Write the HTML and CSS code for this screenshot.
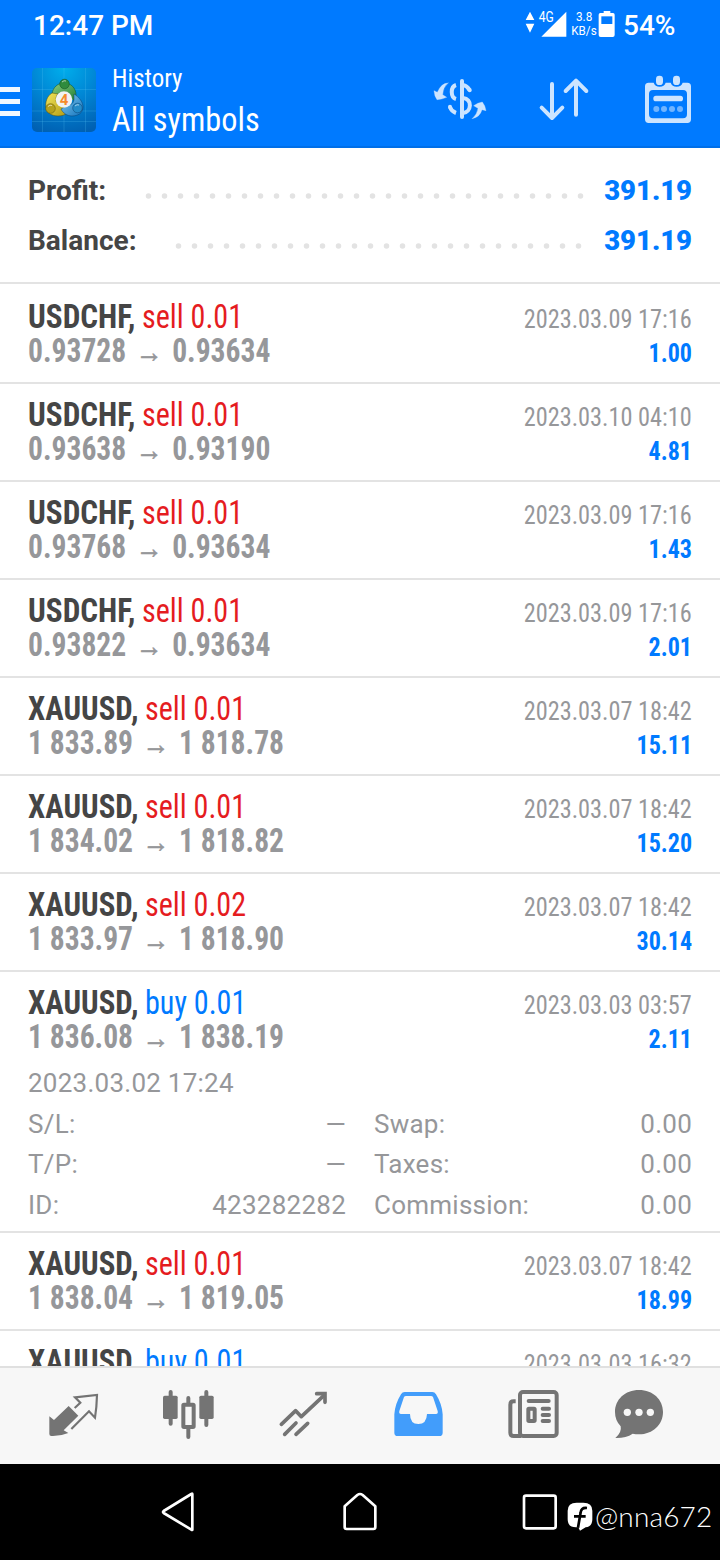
FILE: index.html
```html
<!DOCTYPE html>
<html lang="en">
<head>
<meta charset="utf-8">
<title>History</title>
<link rel="stylesheet" href="styles.css">
</head>
<body>
<div class="phone">
  <header class="top">
    <div class="status">
      <span class="clock">12:47 PM</span>
      <svg class="signals" width="96" height="34" viewBox="310 21 288 102" fill="#fff">
        <path d="M331 35l13 25h-26zM318 71h26l-13 27zM440 35v75h-75zM552 33h20v6h8q5 0 5 5v61q0 6-6 6h-36q-6 0-6-6V44q0-5 5-5h10z"/>
        <path d="M545 49h33v23h-33z" fill="#007aff"/>
        <g class="tiny"><text x="357" y="67" font-size="42" textLength="45" lengthAdjust="spacingAndGlyphs">4G</text>
        <text x="469" y="63" font-size="36" textLength="49" lengthAdjust="spacingAndGlyphs">3.8</text>
        <text x="455" y="105" font-size="36" textLength="76" lengthAdjust="spacingAndGlyphs">KB/s</text></g>
      </svg>
      <span class="charge">54%</span>
    </div>
    <div class="appbar">
      <div class="menu"><i></i><i></i><i></i></div>
      <svg class="logo" width="64" height="64" viewBox="0 0 64 64">
        <defs>
          <radialGradient id="sky" cx=".5" cy="0" r="1.05"><stop offset="0" stop-color="#00aeec"/><stop offset=".5" stop-color="#0085d4"/><stop offset="1" stop-color="#0060b2"/></radialGradient>
          <linearGradient id="green" x2="1" y2="1"><stop offset="0" stop-color="#8ccb7d"/><stop offset="1" stop-color="#1f7f35"/></linearGradient>
          <linearGradient id="gold" x2="1" y2="1"><stop offset="0" stop-color="#f2e65c"/><stop offset="1" stop-color="#b29a12"/></linearGradient>
          <linearGradient id="blue" x2="1" y2="1"><stop offset="0" stop-color="#85cdf0"/><stop offset="1" stop-color="#1272bd"/></linearGradient>
        </defs>
        <rect width="64" height="64" rx="5" fill="url(#sky)"/>
        <path d="M10.500 0v64M32 0v64M53.500 0v64M0 21.500h64M0 43h64M0 53.500h64" stroke="#5cc8f4" stroke-opacity=".22" fill="none"/>
        <g stroke-opacity=".6" stroke-width=".8">
          <path d="M32 15c7 0 12 5 12 12v6l-5-2c0-5-3-7-7-7s-7 2-9 5l-3-3c1-7 6-11 12-11z" fill="url(#green)" stroke="#0b4a20"/>
          <path d="M20 25c-5 3-7 9-6 15 1 5 6 8 12 8 4 0 7-1 9-3l-5-8c-2 1-5-1-6-4 0-3 0-5 2-7z" fill="url(#gold)" stroke="#574b06"/>
          <path d="M42 26c5 3 9 8 9 13 0 6-5 9-11 9-5 0-9-3-11-7l7-4c4 0 6-3 6-6z" fill="url(#blue)" stroke="#083d6d"/>
          <circle cx="32.500" cy="16" r="4.800" fill="#2f8b3d" stroke="#0b4a20"/>
          <circle cx="18.500" cy="40.500" r="4.800" fill="#b5a21e" stroke="#574b06"/>
          <circle cx="45.500" cy="40" r="4.800" fill="#238bc9" stroke="#083d6d"/>
        </g>
        <path d="M30 14q2-2 4-1M16 38.500q2-2 4-1M43 38q2-2 4-1" stroke="#fff" stroke-opacity=".6" fill="none"/>
        <circle cx="32" cy="31.500" r="8.300" fill="#f1f2f3"/>
        <text class="four" x="32" y="37" text-anchor="middle">4</text>
      </svg>
      <div class="titles"><span class="sub cond">History</span><span class="main cond">All symbols</span></div>
      <svg class="actions" width="264" height="56" viewBox="30 216 792 168" fill="none" stroke="#cce4ff" stroke-linecap="round" stroke-linejoin="round">
        <g stroke-width="12">
          <path d="M126 243v108"/>
          <path d="M129 255q12 2 20 16M129 294c29 3 26 42 0 45" stroke-linecap="butt"/>
          <path d="M149 270v1"/>
          <path d="M108 255c-17 5-17 37 0 42M90 321q4 13 18 18" stroke-linecap="butt"/>
          <path d="M90 320v1"/>
        </g>
        <path d="M84 249q-20 0-32 28l-10-5q1 16 9 27 13 0 29-7l-12-8q0-20 16-35zM157 356q15-14 17-31l-13-8q12-9 26-11 9 11 11 26l-12-3q-6 22-29 27z" fill="#cce4ff" stroke="#cce4ff" stroke-width="1"/>
        <path d="M396 252v100M365 323l31 31 31-31M468 344V242M437 273l31-31 31 31" stroke-width="12"/>
        <g stroke="none" fill="#cce4ff">
          <path fill-rule="evenodd" d="M686 248h15q4 12 18 12t18-12h15q4 12 18 12t18-12h14q11 0 11 11v99q0 11-11 11H686q-11 0-11-11v-99q0-11 11-11zM699 270q-12 0-12 12v60q0 13 12 13h90q12 0 12-13v-60q0-12-12-12z"/>
          <rect x="708" y="227" width="21" height="28" rx="10"/><rect x="759" y="227" width="21" height="28" rx="10"/>
          <rect x="700" y="287" width="89" height="17" rx="8"/>
          <g opacity=".55"><circle cx="709" cy="327" r="9"/><circle cx="732" cy="327" r="9"/><circle cx="756" cy="327" r="9"/><circle cx="780" cy="327" r="9"/></g>
        </g>
      </svg>
    </div>
  </header>

  <section class="summary">
    <div class="total"><span>Profit:</span><svg class="dots" width="446" height="6"><path d="M6.500 3h433"/></svg><b>391.19</b></div>
    <div class="total"><span>Balance:</span><svg class="dots" width="416" height="6"><path d="M6.500 3h401"/></svg><b>391.19</b></div>
  </section>

  <main class="deals">
    <article class="deal usd"><div class="line"><span class="name cond"><b>USDCHF,</b> <span class="sell">sell 0.01</span></span><time class="cond">2023.03.09 17:16</time></div><div class="line"><span class="price cond">0.93728 <i>→</i> 0.93634</span><span class="gain cond">1.00</span></div></article>
    <article class="deal usd"><div class="line"><span class="name cond"><b>USDCHF,</b> <span class="sell">sell 0.01</span></span><time class="cond">2023.03.10 04:10</time></div><div class="line"><span class="price cond">0.93638 <i>→</i> 0.93190</span><span class="gain cond">4.81</span></div></article>
    <article class="deal usd"><div class="line"><span class="name cond"><b>USDCHF,</b> <span class="sell">sell 0.01</span></span><time class="cond">2023.03.09 17:16</time></div><div class="line"><span class="price cond">0.93768 <i>→</i> 0.93634</span><span class="gain cond">1.43</span></div></article>
    <article class="deal usd"><div class="line"><span class="name cond"><b>USDCHF,</b> <span class="sell">sell 0.01</span></span><time class="cond">2023.03.09 17:16</time></div><div class="line"><span class="price cond">0.93822 <i>→</i> 0.93634</span><span class="gain cond">2.01</span></div></article>
    <article class="deal"><div class="line"><span class="name cond"><b>XAUUSD,</b> <span class="sell">sell 0.01</span></span><time class="cond">2023.03.07 18:42</time></div><div class="line"><span class="price cond">1 833.89 <i>→</i> 1 818.78</span><span class="gain cond">15.11</span></div></article>
    <article class="deal"><div class="line"><span class="name cond"><b>XAUUSD,</b> <span class="sell">sell 0.01</span></span><time class="cond">2023.03.07 18:42</time></div><div class="line"><span class="price cond">1 834.02 <i>→</i> 1 818.82</span><span class="gain cond">15.20</span></div></article>
    <article class="deal"><div class="line"><span class="name cond"><b>XAUUSD,</b> <span class="sell">sell 0.02</span></span><time class="cond">2023.03.07 18:42</time></div><div class="line"><span class="price cond">1 833.97 <i>→</i> 1 818.90</span><span class="gain cond">30.14</span></div></article>
    <article class="deal open"><div class="line"><span class="name cond"><b>XAUUSD,</b> <span class="buy">buy 0.01</span></span><time class="cond">2023.03.03 03:57</time></div><div class="line"><span class="price cond">1 836.08 <i>→</i> 1 838.19</span><span class="gain cond">2.11</span></div>
      <div class="details">
        <div class="opened">2023.03.02 17:24</div>
        <div class="pair"><span>S/L:</span><span class="none">—</span></div><div class="pair"><span>Swap:</span><span>0.00</span></div>
        <div class="pair"><span>T/P:</span><span class="none">—</span></div><div class="pair"><span>Taxes:</span><span>0.00</span></div>
        <div class="pair"><span>ID:</span><span>423282282</span></div><div class="pair"><span>Commission:</span><span>0.00</span></div>
      </div>
    </article>
    <article class="deal"><div class="line"><span class="name cond"><b>XAUUSD,</b> <span class="sell">sell 0.01</span></span><time class="cond">2023.03.07 18:42</time></div><div class="line"><span class="price cond">1 838.04 <i>→</i> 1 819.05</span><span class="gain cond">18.99</span></div></article>
    <article class="deal"><div class="line"><span class="name cond"><b>XAUUSD,</b> <span class="buy">buy 0.01</span></span><time class="cond">2023.03.03 16:32</time></div></article>
  </main>

  <nav class="tabs">
    <svg width="57" height="56" viewBox="135 48 171 168"><path d="M206 108l29 29-44 44 14 8q-24 10-51 9-6 0-6-6 0-28 0-53l14 11z" fill="#747474"/><path d="M224 114l17-16-16-16 66-7q-1 38-6 68l-18-19-53 53" fill="none" stroke="#747474" stroke-width="6.500"/></svg>
    <svg width="57" height="56" viewBox="480 48 171 168" fill="none" stroke="#747474" stroke-width="12" stroke-linecap="round"><path d="M512 66v95M619 66v99M565 84v18M565 177v24"/><rect x="489" y="77" width="44" height="70" rx="5" fill="#747474" stroke="none"/><rect x="598" y="77" width="43" height="70" rx="5" fill="#747474" stroke="none"/><rect x="550" y="104" width="31" height="67" rx="2" stroke-width="12" stroke-linecap="butt"/></svg>
    <svg width="57" height="56" viewBox="825 48 171 168" fill="none" stroke="#747474" stroke-width="11" stroke-linecap="round"><path d="M844 163l43-41 17 18 68-64" stroke-linejoin="round"/><path d="M950 71h25v26" stroke-width="11"/><path d="M888 159l-34 34M923 160l-35 33"/></svg>
    <svg width="57" height="56" viewBox="90 48 171 168"><path fill="#429dfb" fill-rule="evenodd" d="M134 66h83q7 0 11 7 18 29 20 60v55q0 10-10 10H113q-10 0-10-10v-55q2-31 20-60 4-7 11-7zM138 78q-4 0-6 3l-14 42q-2 9 5 9h27q0 30 25 30t26-30h27q7 0 5-9l-14-42q-2-3-6-3z"/></svg>
    <svg width="57" height="56" viewBox="435 48 171 168" fill="none" stroke="#747474" stroke-width="12"><path d="M467 94h-6q-10 0-10 10v84q0 10 10 10h23"/><rect x="480" y="66" width="110" height="132" rx="9"/><path d="M506 93h60M548 116h19M548 135h19M548 153h19" stroke-linecap="round"/><rect x="505" y="116" width="19" height="37" rx="2"/></svg>
    <svg width="57" height="56" viewBox="753 48 171 168"><path fill="#747474" d="M837 60c42 0 72 29 72 66s-30 67-72 67q-10 0-19-2-21 14-52 13 20-17 16-35-17-18-17-43c0-37 30-66 72-66z"/><g fill="#f7f7f7"><circle cx="802" cy="127" r="11"/><circle cx="837" cy="127" r="11"/><circle cx="871" cy="127" r="11"/></g></svg>
  </nav>

  <footer class="system">
    <svg width="400" height="48" viewBox="480 354 1200 144" fill="none" stroke="#fff" stroke-width="8" stroke-linejoin="round"><path d="M577 372v107q0 2-3 0l-83-50q-4-3 0-6l83-51q3-2 3 0z"/><path d="M1034 409v62q0 6 6 6h80q6 0 6-6v-62l-38-34q-8-6-16 0z"/><rect x="1572" y="377" width="95" height="98" rx="6"/></svg>
    <div class="tag">
      <svg width="26" height="30" viewBox="621 400 78 90"><path fill="#fff" d="M650 402h20q27 0 27 24v26q0 22-20 24l-17 10-5-10h-7q-25 0-25-24v-26q0-24 27-24z"/><path d="M681 418q-17-2-19 13l-8 46M642 443h35" fill="none" stroke="#000" stroke-width="8"/></svg>
      <span>@nna672</span>
    </div>
  </footer>
</div>
</body>
</html>
```
FILE: styles.css
```css
* { box-sizing: border-box; }
body { margin: 0; background: #fff; font-family: Roboto, "Liberation Sans", sans-serif; }
.phone { width: 720px; height: 1560px; display: flex; flex-direction: column; overflow: hidden; }
.cond { font-family: "Roboto Condensed", Roboto, sans-serif; font-stretch: 75%; white-space: nowrap; }

.top { height: 148px; flex: none; background: #007aff; color: #fff; border-bottom: 2px solid #006fe8; }
.status { height: 50px; display: flex; align-items: flex-start; padding: 9px 0 0 33px; font-size: 28px; font-weight: 500; line-height: 33px; }
.clock { width: 490px; }
.signals { display: block; margin-top: -2px; }
.charge { margin-left: 4px; }
.tiny { font-weight: 400; }
.appbar { height: 96px; display: flex; align-items: flex-start; }
.menu { width: 20px; display: flex; flex-direction: column; gap: 7px; padding-top: 37px; }
.menu i { height: 5px; background: #f0f7ff; }
.logo { margin: 18px 0 0 12px; display: block; }
.four { font-size: 15px; font-weight: 700; fill: #f68b2c; }
.titles { width: 334px; padding: 13px 0 0 16px; display: flex; flex-direction: column; }
.sub { font-size: 26.5px; line-height: 30px; transform: scaleX(.94); transform-origin: left; }
.main { font-size: 34px; line-height: 40px; margin-top: 6px; transform: scaleX(.95); transform-origin: left; }
.actions { display: block; margin-top: 22px; }

.summary { height: 136px; flex: none; padding: 18px 28px 0; border-bottom: 2px solid #e3e3e3; }
.total { height: 50px; line-height: 50px; display: flex; align-items: center; font-size: 28px; font-weight: 700; color: #454545; }
.total span { flex: 1; }
.total b { width: 104px; text-align: right; color: #007aff; transform: scaleX(.98); transform-origin: right; }
.dots { margin-top: 9px; fill: none; stroke: #e3e3e3; stroke-width: 5.5; stroke-linecap: round; stroke-dasharray: 0 16; }

.deals { flex: 1; min-height: 0; overflow: hidden; padding-top: 2px; }
.deal { height: 98px; padding: 14px 28px 0; border-bottom: 2px solid #e3e3e3; }
.line { height: 34px; line-height: 34px; display: flex; justify-content: space-between; align-items: baseline; color: #96979a; }
.name { font-size: 33px; }
.name b { display: inline-block; color: #454545; transform: scaleX(.935); transform-origin: left; }
.sell, .buy { display: inline-block; margin-left: -9px; transform: scaleX(.912); transform-origin: left; }
.usd .name b { transform: scaleX(.945); }
.usd .sell { margin-left: -7px; }
.sell { color: #e51c1f; }
.buy { color: #007aff; }
.price { font-size: 33px; font-weight: 700; transform: scaleX(.896); transform-origin: left; }
.price i { font-style: normal; font-weight: 400; font-size: 30px; margin: 0 3px; -webkit-text-stroke: .6px #96979a; }
.line time { font-size: 26px; transform: scaleX(.935); transform-origin: right; }
.gain { font-size: 26px; font-weight: 700; color: #007aff; transform: scaleX(.925); transform-origin: right; }
.open { height: 261px; }
.details { display: grid; grid-template-columns: 318px 318px; column-gap: 28px; margin-top: 9px; font-size: 26px; line-height: 40.6px; color: #96979a; letter-spacing: .25px; }
.opened { grid-column: 1 / 3; }
.pair { display: flex; justify-content: space-between; }

.tabs { height: 98px; flex: none; display: grid; grid-template-columns: repeat(5, 115px) 97px; justify-items: center; align-items: start; padding: 18px 0 0 16px; background: #f7f7f7; border-top: 2px solid #e0e0e0; }
.tabs svg { display: block; }

.system { height: 96px; flex: none; background: #000; padding: 24px 0 0 160px; display: flex; align-items: flex-start; }
.tag { display: flex; align-items: flex-start; margin-left: 7px; padding-top: 14px; color: #fff; font-family: Lato, sans-serif; font-size: 28px; line-height: 28px; gap: 2px; letter-spacing: .15px; font-weight: 300; }
```
